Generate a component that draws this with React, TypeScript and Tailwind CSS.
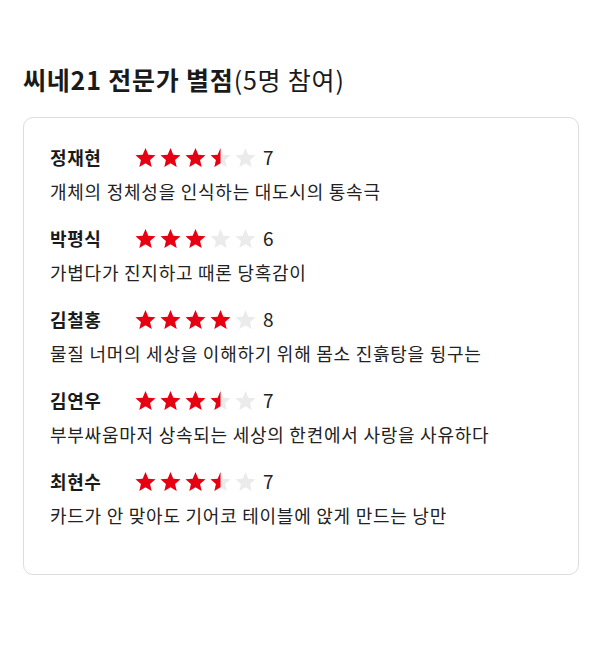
const reviews = [
  { name: "정재현", score: 7, text: "개체의 정체성을 인식하는 대도시의 통속극" },
  { name: "박평식", score: 6, text: "가볍다가 진지하고 때론 당혹감이" },
  { name: "김철홍", score: 8, text: "물질 너머의 세상을 이해하기 위해 몸소 진흙탕을 뒹구는" },
  { name: "김연우", score: 7, text: "부부싸움마저 상속되는 세상의 한켠에서 사랑을 사유하다" },
  { name: "최현수", score: 7, text: "카드가 안 맞아도 기어코 테이블에 앉게 만드는 낭만" },
];

const STAR =
  "M12 17.27L18.18 21l-1.64-7.03L22 9.24l-7.19-.61L12 2 9.19 8.63 2 9.24l5.46 4.73L5.82 21z";

const Star = ({ fill, id }: { fill: number; id: string }) => (
  <svg width="21" height="19" viewBox="2 2 20 19" className="shrink-0">
    <defs>
      <clipPath id={id}>
        <rect x="0" y="0" width={2 + 20 * fill} height="24" />
      </clipPath>
    </defs>
    <path d={STAR} fill="#ebebeb" />
    {fill > 0 && <path d={STAR} fill="#e60012" clipPath={`url(#${id})`} />}
  </svg>
);

const Stars = ({ score, rowKey }: { score: number; rowKey: string }) => {
  const value = score / 2;
  return (
    <div className="flex items-center gap-[4px]">
      {[0, 1, 2, 3, 4].map((i) => {
        const f = value >= i + 1 ? 1 : value > i ? 0.5 : 0;
        return <Star key={i} fill={f} id={`clip-${rowKey}-${i}`} />;
      })}
    </div>
  );
};

export default function App() {
  return (
    <div
      className="w-[607px] h-[669px] bg-white text-[#222]"
      style={{ fontFamily: '"Noto Sans CJK KR", "Noto Sans", sans-serif' }}
    >
      <div className="px-[23px] pt-[61px]">
        <h2 className="text-[25px] leading-[36px] tracking-[0.8px] text-[#1a1a1a]">
          <span className="font-bold">씨네21 전문가 별점</span>
          <span>(5명 참여)</span>
        </h2>
        <div className="mt-[20px] w-[556px] rounded-[10px] border border-[#dddddd] pl-[26px] pt-[27px] pb-[47px]">
          <ul className="flex flex-col gap-[23px]">
            {reviews.map((r, idx) => (
              <li key={r.name} className="flex flex-col gap-[10px]">
                <div className="flex items-center h-[24px]">
                  <span className="w-[85px] text-[18px] font-bold leading-[24px] tracking-[0.6px] text-[#1a1a1a]">
                    {r.name}
                  </span>
                  <Stars score={r.score} rowKey={String(idx)} />
                  <span className="ml-[7px] text-[19px] leading-[24px] text-[#222]">
                    {r.score}
                  </span>
                </div>
                <p className="text-[18px] leading-[24px] tracking-[0.75px] text-[#222]">
                  {r.text}
                </p>
              </li>
            ))}
          </ul>
        </div>
      </div>
    </div>
  );
}
